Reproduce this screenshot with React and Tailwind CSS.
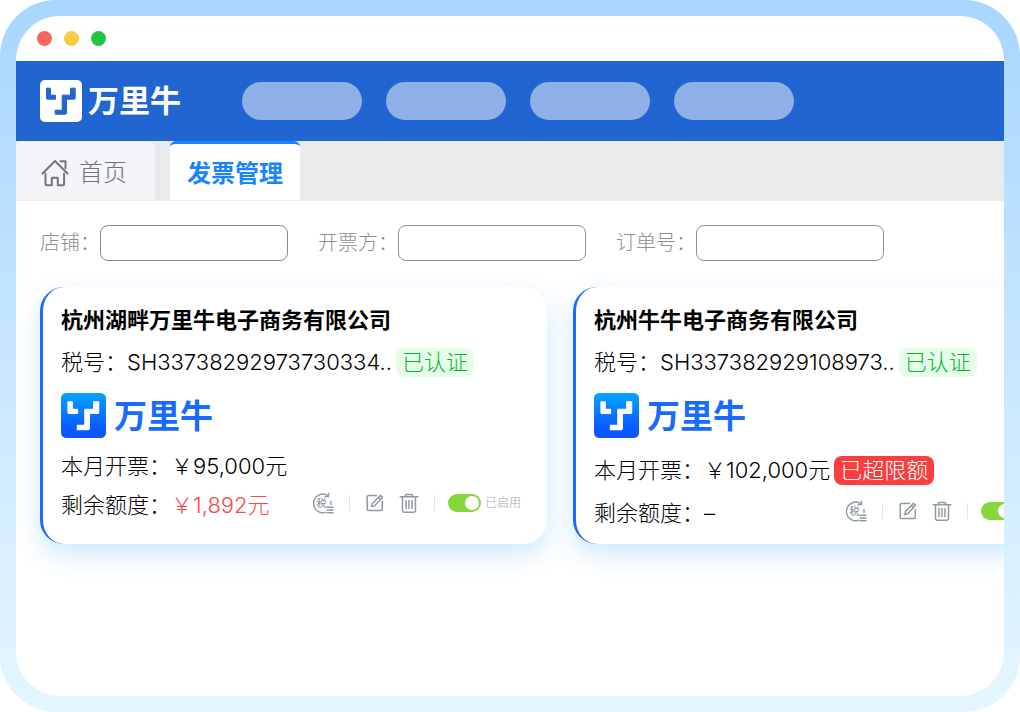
import React, { useState } from "react";
import clsx from "clsx";

const navItems = [1, 2, 3, 4];

const filters = [
  { id: "shop", label: "店铺：", border: "border-[#7f8b9b]" },
  { id: "issuer", label: "开票方：", border: "border-[#8f8f8f]" },
  { id: "order", label: "订单号：", border: "border-[#8f8f8f]" },
];

const companies = [
  {
    name: "杭州湖畔万里牛电子商务有限公司",
    taxNo: "SH33738292973730334..",
    invoiced: "￥95,000元",
    remaining: "￥1,892元",
    overLimit: false,
    status: "已启用",
  },
  {
    name: "杭州牛牛电子商务有限公司",
    taxNo: "SH337382929108973..",
    invoiced: "￥102,000元",
    remaining: "–",
    overLimit: true,
  },
];

const LogoShape = ({ className }) => (
  <g className={className} strokeWidth="1" strokeLinejoin="round">
    <path d="M6.500 8.200h4v7h5v4h-8.200l-.8-.8z" />
    <path d="M30.500 8.200h4.700v10.200l-.8.8h-7.900v14.200l-.8.8h-10.500v-4h7v-15h8.300z" />
  </g>
);

const HeaderLogo = () => (
  <a href="#" className="flex items-center gap-[6px] text-white">
    <svg viewBox="0 0 42 42" className="size-[42px]" aria-hidden="true">
      <rect width="42" height="42" rx="5" fill="#fff" />
      <LogoShape className="fill-[#2165d1] stroke-[#2165d1]" />
    </svg>
    <span className="text-[31px] leading-10 font-bold">万里牛</span>
  </a>
);

const CardLogo = ({ id }) => (
  <div className="flex items-center gap-2 text-[#176bff]">
    <svg viewBox="0 0 42 42" className="size-[45px]" aria-hidden="true">
      <defs>
        <linearGradient id={id} x1="0" y1="0" x2="0" y2="1">
          <stop offset="0" stopColor="#03a4ff" />
          <stop offset="0.75" stopColor="#0a5cff" />
          <stop offset="1" stopColor="#0a56ff" />
        </linearGradient>
      </defs>
      <rect width="42" height="42" rx="5" fill={`url(#${id})`} />
      <LogoShape className="fill-white stroke-white" />
    </svg>
    <span className="text-[33px] leading-10 font-bold">万里牛</span>
  </div>
);

const HomeIcon = () => (
  <svg viewBox="0 0 28 28" className="size-7" fill="none" stroke="#73777c" strokeWidth="2" strokeLinecap="round" strokeLinejoin="round" aria-hidden="true">
    <path d="M1.500 14.500 14 2l12.500 12.500" />
    <path d="M19.500 2.300h5v7" />
    <path d="M4.500 14.500v10.200a1.500 1.500 0 0 0 1.500 1.500h4.800v-7.400h6v7.400h4.800a1.500 1.500 0 0 0 1.500-1.500V14.500" />
  </svg>
);

const TaxIcon = () => (
  <svg viewBox="0 0 22 22" className="size-[22px]" fill="none" stroke="#8d9aa0" strokeWidth="1.400" aria-hidden="true">
    <path d="M14 20.200a9.300 9.300 0 1 1 1.800-16.600" />
    <path d="M16.500 0.800v3.700h-4" />
    <path d="M19 9v4M14.500 15.300h7M14.500 18h7M14.500 20.700h7" />
    <text x="4.500" y="14.800" fontSize="10" fontWeight="500" fill="#8d9aa0" stroke="none">税</text>
  </svg>
);

const EditIcon = () => (
  <svg viewBox="0 0 20 20" className="size-5" fill="none" stroke="#8d9aa0" strokeWidth="1.500" strokeLinejoin="round" strokeLinecap="round" aria-hidden="true">
    <path d="M11.500 2.500H3.500a1.300 1.300 0 0 0-1.300 1.300v12.400a1.300 1.300 0 0 0 1.300 1.300h12.500a1.300 1.300 0 0 0 1.300-1.300V8.500" />
    <path d="M15.500 2.300 17.500 4.300 9.700 12.700 6.700 13.600 7.400 10.600zM13.600 4.500l1.900 1.900" />
  </svg>
);

const TrashIcon = () => (
  <svg viewBox="0 0 20 20" className="size-5" fill="none" stroke="#8d9aa0" strokeWidth="1.500" strokeLinejoin="round" strokeLinecap="round" aria-hidden="true">
    <path d="M1.200 3.800h17.600" />
    <path d="M6 3.500l.8-2h6.400l.8 2" />
    <path d="M3.500 4.500v13a1.700 1.700 0 0 0 1.700 1.700h9.600a1.700 1.700 0 0 0 1.700-1.700v-13" />
    <path d="M7 7.500v8M10 7.500v8M13 7.500v8" />
  </svg>
);

const CardActions = ({ company }) => {
  const [enabled, setEnabled] = useState(true);

  return (
    <div className="flex items-center">
      <button type="button" aria-label="税务信息">
        <TaxIcon />
      </button>
      <span className="mx-[15px] h-4 w-px bg-[#e3e5e8]" />
      <div className="flex gap-[14px]">
        <button type="button" aria-label="编辑">
          <EditIcon />
        </button>
        <button type="button" aria-label="删除">
          <TrashIcon />
        </button>
      </div>
      <span className="mr-[13px] ml-[15px] h-4 w-px bg-[#e3e5e8]" />
      <label className="flex h-6 w-[73px] items-center gap-1 text-xs font-light text-[#a4abb0]">
        <input
          type="checkbox"
          role="switch"
          aria-label={`启用 ${company.name}`}
          checked={enabled}
          onChange={(e) => setEnabled(e.target.checked)}
          className="flex h-[18px] w-[33px] shrink-0 appearance-none items-center rounded-full bg-gray-300 px-[2px] before:size-[14px] before:rounded-full before:bg-white checked:justify-end checked:bg-[#86d63e]"
        />
        {company.status}
      </label>
    </div>
  );
};

const CompanyCard = ({ company, id }) => (
  <article className="w-[507px] shrink-0 rounded-3xl border-l-[3px] border-[#176bff] bg-white pt-[19px] pr-[26px] pb-[17px] pl-[18px] text-[22px] leading-7 font-light text-black shadow-[0_10px_24px_rgba(30,150,250,0.22)]">
    <h2 className="font-bold">{company.name}</h2>
    <div className="mt-[14px] flex items-center gap-1 leading-[29px]">
      <p>税号：{company.taxNo}</p>
      <span className="rounded-lg bg-[#e6fde9] px-[6px] text-[#07b52c]">已认证</span>
    </div>
    <div className="mt-4">
      <CardLogo id={id} />
    </div>
    <div className={clsx("flex flex-col", company.overLimit ? "mt-[18px] gap-[14px]" : "mt-[14px] gap-[10px]")}>
      <div className="flex items-center gap-1 leading-[29px]">
        <p>本月开票：{company.invoiced}</p>
        {company.overLimit && <span className="rounded-lg bg-[#f83e3e] px-[6px] text-white">已超限额</span>}
      </div>
      <div className="flex items-start justify-between">
        <p>
          剩余额度：
          <span className={clsx(!company.overLimit && "text-[#fb4a4a]")}>{company.remaining}</span>
        </p>
        <CardActions company={company} />
      </div>
    </div>
  </article>
);

const App = () => {
  return (
    <div className="flex min-h-screen flex-col rounded-[56px] bg-linear-to-b from-[#a8d6ff] to-[#e5f6ff] p-4 font-['Inter','Noto_Sans_CJK_SC',sans-serif]">
      <div className="flex flex-1 flex-col overflow-hidden rounded-[44px] bg-white">
        <div className="flex h-[45px] shrink-0 items-center gap-3 px-[21px]">
          <span className="size-[15px] rounded-full bg-[#f96660]" />
          <span className="size-[15px] rounded-full bg-[#fbcb45]" />
          <span className="size-[15px] rounded-full bg-[#23c343]" />
        </div>

        <header className="flex h-20 shrink-0 items-center bg-[#2165d1] px-6">
          <HeaderLogo />
          <nav className="ml-[61px] flex gap-6">
            {navItems.map((item) => (
              <span key={item} className="h-[38px] w-[120px] rounded-full bg-[#8fb0e7]" />
            ))}
          </nav>
        </header>

        <nav className="flex h-[60px] shrink-0 gap-[15px] border-b border-[#ebecee] bg-[#e9eaec] text-2xl">
          <a href="#" className="flex items-center gap-[10px] rounded-t-md bg-[#f4f5f8] pt-1 pr-7 pl-[25px] font-light text-[#707377]">
            <HomeIcon />
            首页
          </a>
          <a href="#" aria-current="page" className="flex items-center rounded-t-md border-t-[3px] border-[#1a84ff] bg-white px-[17px] pt-1 font-bold text-[#1a84ff]">
            发票管理
          </a>
        </nav>

        <main className="flex flex-col gap-[26px] px-6 pt-6 pb-10">
          <form className="flex gap-[30px]">
            {filters.map((f) => (
              <div key={f.id} className="flex shrink-0 items-center text-xl font-light text-[#8f8f8f]">
                <label htmlFor={f.id}>{f.label}</label>
                <input id={f.id} type="text" className={clsx("h-9 w-[188px] rounded-lg border bg-white px-3 text-base text-gray-700", f.border)} />
              </div>
            ))}
          </form>

          <section className="flex gap-[26px]">
            {companies.map((company, i) => (
              <CompanyCard key={company.name} id={`card-logo-${i}`} company={company} />
            ))}
          </section>
        </main>
      </div>
    </div>
  );
};

export default App;
